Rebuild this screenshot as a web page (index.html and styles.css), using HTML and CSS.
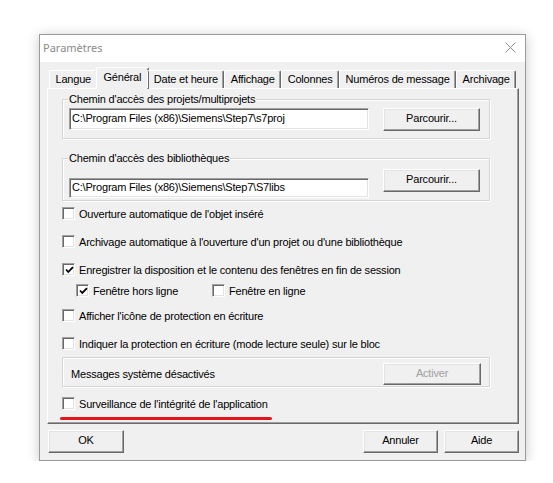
FILE: index.html
```html
<!DOCTYPE html>
<html lang="fr">
<head>
  <meta charset="UTF-8" />
  <title>Paramètres</title>
  <link rel="stylesheet" href="styles.css">
</head>
<body>
  <div class="window">
    <div class="titlebar">
      <span class="title">Paramètres</span>
      <svg class="close" width="11" height="11" viewBox="0 0 11 11">
        <path d="M0.5 0.5 L10.5 10.5 M10.5 0.5 L0.5 10.5" stroke="#8c8c8c" stroke-width="1" fill="none"/>
      </svg>
    </div>

    <div class="client">
      <div class="tabs">
        <div class="tab">Langue</div>
        <div class="tab active">Général</div>
        <div class="tab">Date et heure</div>
        <div class="tab">Affichage</div>
        <div class="tab">Colonnes</div>
        <div class="tab">Numéros de message</div>
        <div class="tab">Archivage</div>
      </div>

      <div class="pane">
        <fieldset class="group group-projects">
          <legend>Chemin d'accès des projets/multiprojets</legend>
          <div class="path-row">
            <div class="field">C:\Program Files (x86)\Siemens\Step7\s7proj</div>
            <div class="btn btn-browse">Parcourir...</div>
          </div>
        </fieldset>

        <fieldset class="group group-libs">
          <legend>Chemin d'accès des bibliothèques</legend>
          <div class="path-row">
            <div class="field">C:\Program Files (x86)\Siemens\Step7\S7libs</div>
            <div class="btn btn-browse">Parcourir...</div>
          </div>
        </fieldset>

        <div class="check-row r-open"><span class="box"></span>Ouverture automatique de l'objet inséré</div>
        <div class="check-row r-archive"><span class="box"></span>Archivage automatique à l'ouverture d'un projet ou d'une bibliothèque</div>
        <div class="check-row r-save"><span class="box checked"><svg width="9" height="9" viewBox="0 0 9 9"><path d="M1 3.5 L3.3 6 L8 1.2" stroke="#000" stroke-width="1.8" fill="none"/></svg></span>Enregistrer la disposition et le contenu des fenêtres en fin de session</div>
        <div class="check-row sub r-windows">
          <span class="opt"><span class="box checked"><svg width="9" height="9" viewBox="0 0 9 9"><path d="M1 3.5 L3.3 6 L8 1.2" stroke="#000" stroke-width="1.8" fill="none"/></svg></span>Fenêtre hors ligne</span>
          <span class="opt"><span class="box"></span>Fenêtre en ligne</span>
        </div>
        <div class="check-row r-icon"><span class="box"></span>Afficher l'icône de protection en écriture</div>
        <div class="check-row r-protect"><span class="box"></span>Indiquer la protection en écriture (mode lecture seule) sur le bloc</div>

        <div class="group messages">
          <span>Messages système désactivés</span>
          <div class="btn disabled">Activer</div>
        </div>

        <div class="check-row r-integrity"><span class="box"></span>Surveillance de l'intégrité de l'application</div>
        <div class="mark"></div>
      </div>

      <div class="footer">
        <div class="btn btn-ok">OK</div>
        <div class="btn btn-cancel">Annuler</div>
        <div class="btn btn-help">Aide</div>
      </div>
    </div>
  </div>
</body>
</html>
```

FILE: styles.css
```css
body {
  margin: 0;
  padding: 34px 0 0 39px;
  background: #fff;
  font-family: "Liberation Sans", Arial, sans-serif;
  font-size: 11px;
  letter-spacing: -0.2px;
  color: #000;
}
.window {
  width: 487px;
  height: 427px;
  box-sizing: border-box;
  border: 1px solid #9b9b9b;
  box-shadow: 0 2px 12px rgba(0,0,0,0.22);
  display: flex;
  flex-direction: column;
}
.titlebar {
  height: 27px;
  background: #fff;
  display: flex;
  align-items: center;
  justify-content: space-between;
  padding: 0 9px 3px 3px;
  box-sizing: border-box;
}
.title {
  font-family: "Noto Sans", sans-serif;
  font-size: 11px;
  letter-spacing: 0;
  color: #8a8a8a;
}
.client {
  flex: 1;
  background: #f0f0f0;
  padding-top: 5px;
}

/* tab strip */
.tabs {
  display: flex;
  align-items: flex-end;
  height: 21px;
  padding-left: 2px;
  margin-left: 7px;
  position: relative;
  z-index: 1;
}
.tab {
  height: 18px;
  line-height: 17px;
  padding: 0 5.5px;
  box-sizing: border-box;
  border-top: 1px solid #fff;
  border-left: 1px solid #fff;
  border-right: 1px solid #696969;
  box-shadow: inset -1px 0 #a0a0a0;
  border-radius: 2px 2px 0 0;
  white-space: nowrap;
}
.tab.active {
  height: 22px;
  line-height: 18px;
  margin: 0 -2px -1px;
  background: #f0f0f0;
  padding: 0 7px;
}

/* tab page */
.pane {
  height: 336px;
  margin: 0 6px 0 7px;
  box-sizing: border-box;
  border: 1px solid;
  border-color: #fff #696969 #696969 #fff;
  box-shadow: inset -1px -1px #a0a0a0;
  padding: 4px 28px 0 14px;
}
.group {
  margin: 0;
  border: 1px solid #d5d5d5;
  box-shadow: 1px 1px 0 #fff, inset 1px 1px 0 #fff;
}
fieldset.group {
  padding: 0 9px 7px 6px;
}
legend {
  line-height: 12px;
  padding: 0 1px;
  margin-left: -1px;
  background: #f0f0f0;
}
.path-row {
  display: flex;
  align-items: flex-start;
  margin-top: 3px;
}
.field {
  width: 300px;
  height: 22px;
  box-sizing: border-box;
  background: #fff;
  border: 1px solid;
  border-color: #a0a0a0 #fff #fff #a0a0a0;
  box-shadow: inset 1px 1px #696969, inset -1px -1px #e3e3e3;
  padding: 0 2px;
  line-height: 19px;
  white-space: nowrap;
}
.group-libs {
  margin-top: 13px !important;
}
.group-libs .path-row {
  margin-top: 5px;
}
.group-libs .field {
  height: 20px;
  line-height: 17px;
  margin-top: 9px;
}
fieldset.group-libs {
  padding-bottom: 2px;
}

.btn {
  height: 23px;
  box-sizing: border-box;
  border: 1px solid;
  border-color: #fff #696969 #696969 #fff;
  box-shadow: inset -1px -1px #a0a0a0, inset 1px 1px #e3e3e3;
  background: #f0f0f0;
  text-align: center;
  line-height: 19px;
}
.btn-browse {
  width: 97px;
  margin-left: auto;
}
.btn.disabled {
  width: 98px;
  height: 22px;
  color: #a0a0a0;
}

/* check boxes */
.check-row {
  display: flex;
  align-items: center;
  height: 13px;
  line-height: 12px;
  white-space: nowrap;
}
.box {
  width: 13px;
  height: 13px;
  box-sizing: border-box;
  background: #fff;
  border: 1px solid;
  border-color: #a0a0a0 #fff #fff #a0a0a0;
  box-shadow: inset 1px 1px #696969, inset -1px -1px #e3e3e3;
  margin-right: 4px;
  display: flex;
  align-items: center;
  justify-content: center;
  flex-shrink: 0;
}
.box svg {
  margin: 1px 0 0 1px;
}
.check-row.sub {
  padding-left: 14px;
}
.opt {
  display: flex;
  align-items: center;
  width: 136px;
}
.r-open { margin-top: 6px; }
.r-archive { margin-top: 15px; }
.r-save { margin-top: 15px; }
.r-windows { margin-top: 8px; }
.r-icon { margin-top: 12px; }
.r-protect { margin-top: 15px; }
.r-integrity { margin-top: 10px; }

.messages {
  margin-top: 7px;
  height: 30px;
  box-sizing: border-box;
  display: flex;
  align-items: center;
  justify-content: space-between;
  padding: 4px 8px 0 8px;
}

/* red underline under the last option */
.mark {
  width: 212px;
  height: 3px;
  margin: 7px 0 0 -2px;
  border-radius: 2px;
  background: #e3161e;
}

.footer {
  display: flex;
  padding: 6px 6px 0 8px;
}
.btn-ok {
  width: 76px;
}
.btn-cancel {
  width: 75px;
  margin-left: auto;
}
.btn-help {
  width: 75px;
  margin-left: 6px;
}
```
